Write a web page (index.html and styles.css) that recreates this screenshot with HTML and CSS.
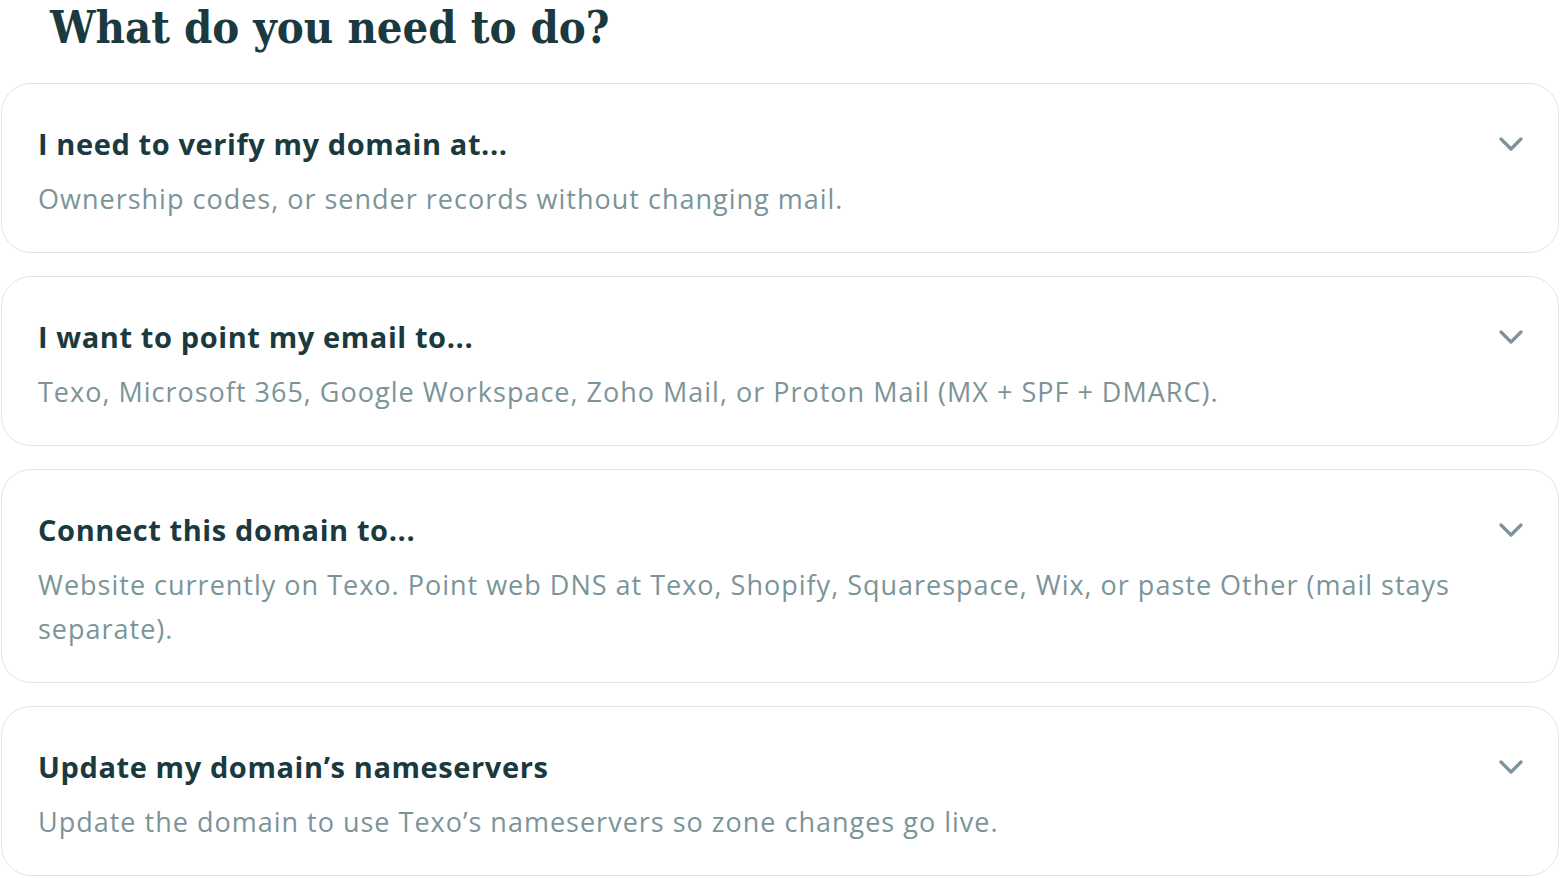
FILE: index.html
```html
<!DOCTYPE html>
<html lang="en">
<head>
  <meta charset="UTF-8">
  <meta name="viewport" content="width=device-width, initial-scale=1.0">
  <title>What do you need to do?</title>
  <link rel="stylesheet" href="styles.css">
</head>
<body>
  <div class="page">
    <h1>What do you need to do?</h1>

    <div class="options">
      <div class="option">
        <div class="option-text">
          <h2>I need to verify my domain at...</h2>
          <p>Ownership codes, or sender records without changing mail.</p>
        </div>
        <svg class="chevron" viewBox="0 0 24 24"><path d="M4 8l8 8 8-8"/></svg>
      </div>

      <div class="option">
        <div class="option-text">
          <h2>I want to point my email to...</h2>
          <p>Texo, Microsoft 365, Google Workspace, Zoho Mail, or Proton Mail (MX + SPF + DMARC).</p>
        </div>
        <svg class="chevron" viewBox="0 0 24 24"><path d="M4 8l8 8 8-8"/></svg>
      </div>

      <div class="option">
        <div class="option-text">
          <h2>Connect this domain to...</h2>
          <p>Website currently on Texo. Point web DNS at Texo, Shopify, Squarespace, Wix, or paste Other (mail stays separate).</p>
        </div>
        <svg class="chevron" viewBox="0 0 24 24"><path d="M4 8l8 8 8-8"/></svg>
      </div>

      <div class="option">
        <div class="option-text">
          <h2>Update my domain’s nameservers</h2>
          <p>Update the domain to use Texo’s nameservers so zone changes go live.</p>
        </div>
        <svg class="chevron" viewBox="0 0 24 24"><path d="M4 8l8 8 8-8"/></svg>
      </div>
    </div>
  </div>
</body>
</html>
```

FILE: styles.css
```css
* {
  margin: 0;
  padding: 0;
  box-sizing: border-box;
}

body {
  font-family: 'Open Sans', 'Noto Sans', sans-serif;
  background: #ffffff;
  color: #1a3a40;
}

.page {
  padding: 1px 1px 0;
}

h1 {
  font-family: 'DejaVu Serif Condensed', 'DejaVu Serif', serif;
  font-size: 45px;
  line-height: 50px;
  font-weight: 700;
  color: #1a3a40;
  padding-top: 2px;
  padding-left: 49px;
  margin-bottom: 30px;
}

.options {
  display: flex;
  flex-direction: column;
  gap: 23px;
}

.option {
  display: flex;
  align-items: flex-start;
  justify-content: space-between;
  border: 1.5px solid #dde8e6;
  border-radius: 30px;
  padding: 40px 32px 31px 36px;
  cursor: pointer;
}

.option-text h2 {
  font-size: 29px;
  line-height: 40px;
  font-weight: 700;
  letter-spacing: 0.6px;
  color: #1a3a40;
  margin-bottom: 13px;
}

.option-text p {
  font-size: 27px;
  line-height: 44px;
  letter-spacing: 1px;
  color: #7b9499;
}

.chevron {
  flex: none;
  width: 30px;
  height: 30px;
  margin-top: 5px;
  margin-left: 24px;
  fill: none;
  stroke: #7b9499;
  stroke-width: 2.6;
  stroke-linecap: round;
  stroke-linejoin: round;
}
```
